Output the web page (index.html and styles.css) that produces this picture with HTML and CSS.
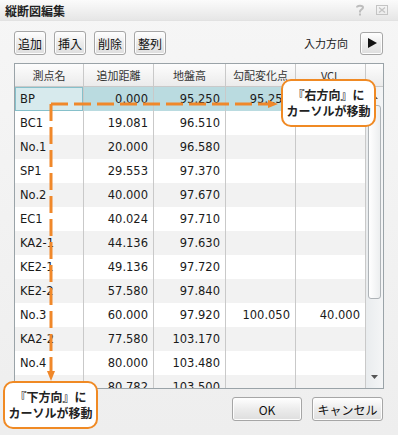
FILE: index.html
```html
<!DOCTYPE html>
<html lang="ja">
<head>
    <meta charset="UTF-8">
    <title>縦断図編集</title>
    <link rel="stylesheet" href="styles.css">
</head>
<body>
    <div class="window">
        <div class="titlebar">
            <span class="title">縦断図編集</span>
            <span class="title-icons">
                <svg width="12" height="12" viewBox="0 0 12 12"><path d="M3 3.5 C3 1 9 1 9 3.5 C9 5.5 6 5.5 6 7.5 L6 8.5" fill="none" stroke="#bdbdbd" stroke-width="2"/><rect x="5" y="9.5" width="2" height="2" fill="#bdbdbd"/></svg>
                <svg width="12" height="12" viewBox="0 0 12 12"><rect x="0.5" y="1.5" width="11" height="9" fill="none" stroke="#c4c4c4"/><path d="M3 3.5 L9 8.5 M9 3.5 L3 8.5" stroke="#c4c4c4" stroke-width="1.4"/></svg>
            </span>
        </div>

        <div class="toolbar">
            <button class="btn small">追加</button>
            <button class="btn small">挿入</button>
            <button class="btn small">削除</button>
            <button class="btn small">整列</button>
            <span class="dir-label">入力方向</span>
            <button class="btn arrow-btn">
                <svg width="10" height="10" viewBox="0 0 10 10"><path d="M1 0 L10 5 L1 10 Z" fill="#111"/></svg>
            </button>
        </div>

        <div class="grid">
            <div class="head">
                <div class="hcell">測点名</div>
                <div class="hcell">追加距離</div>
                <div class="hcell">地盤高</div>
                <div class="hcell">勾配変化点</div>
                <div class="hcell">VCL</div>
                <div class="hcell blank"></div>
            </div>
            <div class="body">
                <div class="rows" id="rows"></div>
                <div class="scrollbar">
                    <div class="sb-up">
                        <svg width="7" height="4" viewBox="0 0 7 4"><path d="M0 4 L3.5 0 L7 4 Z" fill="#555"/></svg>
                    </div>
                    <div class="sb-thumb"></div>
                    <div class="sb-down">
                        <svg width="7" height="4" viewBox="0 0 7 4"><path d="M0 0 L7 0 L3.5 4 Z" fill="#555"/></svg>
                    </div>
                </div>
            </div>
        </div>

        <div class="footer">
            <button class="btn wide">OK</button>
            <button class="btn wide">キャンセル</button>
        </div>

        <!-- cursor direction arrows -->
        <svg class="arrows" width="398" height="435" viewBox="0 0 398 435">
            <path d="M51 104 L268 104" stroke="#f0882a" stroke-width="3" stroke-dasharray="17 6" fill="none"/>
            <path d="M268 100 L278 104 L268 108 Z" fill="#f0882a"/>
            <path d="M51 104 L51 371" stroke="#f0882a" stroke-width="3" stroke-dasharray="17 6" fill="none"/>
            <path d="M47 371 L51 381 L55 371 Z" fill="#f0882a"/>
        </svg>

        <div class="bubble bubble-right">『右方向』に<br>カーソルが移動</div>
        <div class="bubble bubble-down">『下方向』に<br>カーソルが移動</div>
    </div>

    <script>
        const data = [
            ["BP", "0.000", "95.250", "95.250", ""],
            ["BC1", "19.081", "96.510", "", ""],
            ["No.1", "20.000", "96.580", "", ""],
            ["SP1", "29.553", "97.370", "", ""],
            ["No.2", "40.000", "97.670", "", ""],
            ["EC1", "40.024", "97.710", "", ""],
            ["KA2-1", "44.136", "97.630", "", ""],
            ["KE2-1", "49.136", "97.720", "", ""],
            ["KE2-2", "57.580", "97.840", "", ""],
            ["No.3", "60.000", "97.920", "100.050", "40.000"],
            ["KA2-2", "77.580", "103.170", "", ""],
            ["No.4", "80.000", "103.480", "", ""],
            ["", "80.782", "103.500", "", ""]
        ];

        const rowsElement = document.getElementById("rows");

        data.forEach((values, i) => {
            const row = document.createElement("div");
            row.className = "row" + (i % 2 === 0 ? " alt" : "") + (i === 0 ? " selected" : "");
            values.forEach((value, c) => {
                const cell = document.createElement("div");
                cell.className = c === 0 ? "cell name" : "cell num";
                if (i === 0 && c === 0) cell.classList.add("focus");
                cell.textContent = value;
                row.appendChild(cell);
            });
            rowsElement.appendChild(row);
        });
    </script>
</body>
</html>
```

FILE: styles.css
```css
body {
    margin: 0;
    background-color: #f0f0f0;
    font-family: "DejaVu Sans", "Noto Sans CJK JP", sans-serif;
    color: #1a1a1a;
}

.window {
    position: relative;
    width: 398px;
    height: 435px;
    overflow: hidden;
    background: linear-gradient(#f6f6f6, #eeeeee);
}

.titlebar {
    height: 20px;
    display: flex;
    align-items: center;
    justify-content: space-between;
    padding: 0 10px 0 5px;
    background: linear-gradient(#fbfbfb, #e6e6e6);
    border-bottom: 1px solid #e2e2e2;
}

.title {
    font-family: "Noto Sans CJK JP", sans-serif;
    font-size: 12px;
    font-weight: bold;
    color: #222;
}

.title-icons {
    display: flex;
    gap: 10px;
}

.toolbar {
    display: flex;
    align-items: center;
    height: 24px;
    margin-top: 10px;
    padding: 0 15px 0 14px;
}

.btn {
    font-family: "Noto Sans CJK JP", sans-serif;
    font-size: 12px;
    color: #111;
    border: 1px solid #a6a6a6;
    border-radius: 3px;
    background: linear-gradient(#ffffff, #ececec 50%, #dedede);
    padding: 0;
    height: 24px;
    box-shadow: inset 0 0 0 1px #fdfdfd;
}

.small {
    width: 32px;
    margin-right: 8px;
}

.dir-label {
    margin-left: auto;
    margin-right: 12px;
    font-family: "Noto Sans CJK JP", sans-serif;
    font-size: 11px;
}

.arrow-btn {
    width: 23px;
    height: 23px;
    display: flex;
    align-items: center;
    justify-content: center;
}

.grid {
    margin: 8px 0 0 14px;
    width: 370px;
    height: 326px;
    box-sizing: border-box;
    border: 1px solid #9aa3a8;
    background-color: #fff;
    overflow: hidden;
}

.head {
    display: grid;
    grid-template-columns: 69px 70px 72px 70px 70px 17px;
    height: 23px;
}

.hcell {
    display: flex;
    align-items: center;
    justify-content: center;
    font-family: "Noto Sans CJK JP", sans-serif;
    font-size: 11px;
    color: #333;
    background: linear-gradient(#fdfdfd, #ebebeb);
    border-right: 1px solid #c9c9c9;
    border-bottom: 1px solid #c9c9c9;
}

.hcell.blank {
    border-right: none;
}

.body {
    display: flex;
    height: 301px;
}

.rows {
    width: 351px;
    overflow: hidden;
}

.row {
    display: grid;
    grid-template-columns: 69px 70px 72px 70px 70px;
    height: 24px;
    background-color: #fff;
}

.row.alt {
    background-color: #f2f2f2;
}

.row.selected {
    background-color: #badbe0;
}

.cell {
    display: flex;
    align-items: center;
    font-size: 11.5px;
    padding: 0 5px;
    border-right: 1px solid #c9c9c9;
    white-space: nowrap;
    overflow: hidden;
}

.num {
    justify-content: flex-end;
}

.cell.focus {
    background-color: #d7eaed;
    box-shadow: inset 0 0 0 1px #86c0ca;
}

.scrollbar {
    width: 17px;
    display: flex;
    flex-direction: column;
    align-items: center;
    background: linear-gradient(90deg, #e9ecee, #f4f5f6);
}

.sb-up,
.sb-down {
    height: 16px;
    display: flex;
    align-items: center;
    justify-content: center;
}

.sb-up {
    margin-top: 2px;
}

.sb-thumb {
    width: 13px;
    height: 194px;
    box-sizing: border-box;
    border: 1px solid #aeb3b7;
    border-radius: 3px;
    background: linear-gradient(90deg, #ffffff, #eceeef);
}

.sb-down {
    margin-top: auto;
    margin-bottom: 3px;
}

.footer {
    display: flex;
    justify-content: flex-end;
    gap: 10px;
    margin-top: 8px;
    padding-right: 15px;
}

.wide {
    width: 70px;
    height: 24px;
    font-size: 12px;
}

.wide:last-child {
    width: 71px;
}

.arrows {
    position: absolute;
    top: 0;
    left: 0;
    pointer-events: none;
}

.bubble {
    position: absolute;
    box-sizing: border-box;
    width: 95px;
    height: 48px;
    border: 2px solid #f08a24;
    border-radius: 10px;
    background-color: #fff;
    font-family: "Noto Sans CJK JP", sans-serif;
    font-size: 12px;
    font-weight: bold;
    line-height: 16px;
    color: #222;
    display: flex;
    align-items: center;
    justify-content: center;
    text-align: center;
}

.bubble-right {
    left: 281px;
    top: 79px;
}

.bubble-down {
    left: 3px;
    top: 381px;
}
```
